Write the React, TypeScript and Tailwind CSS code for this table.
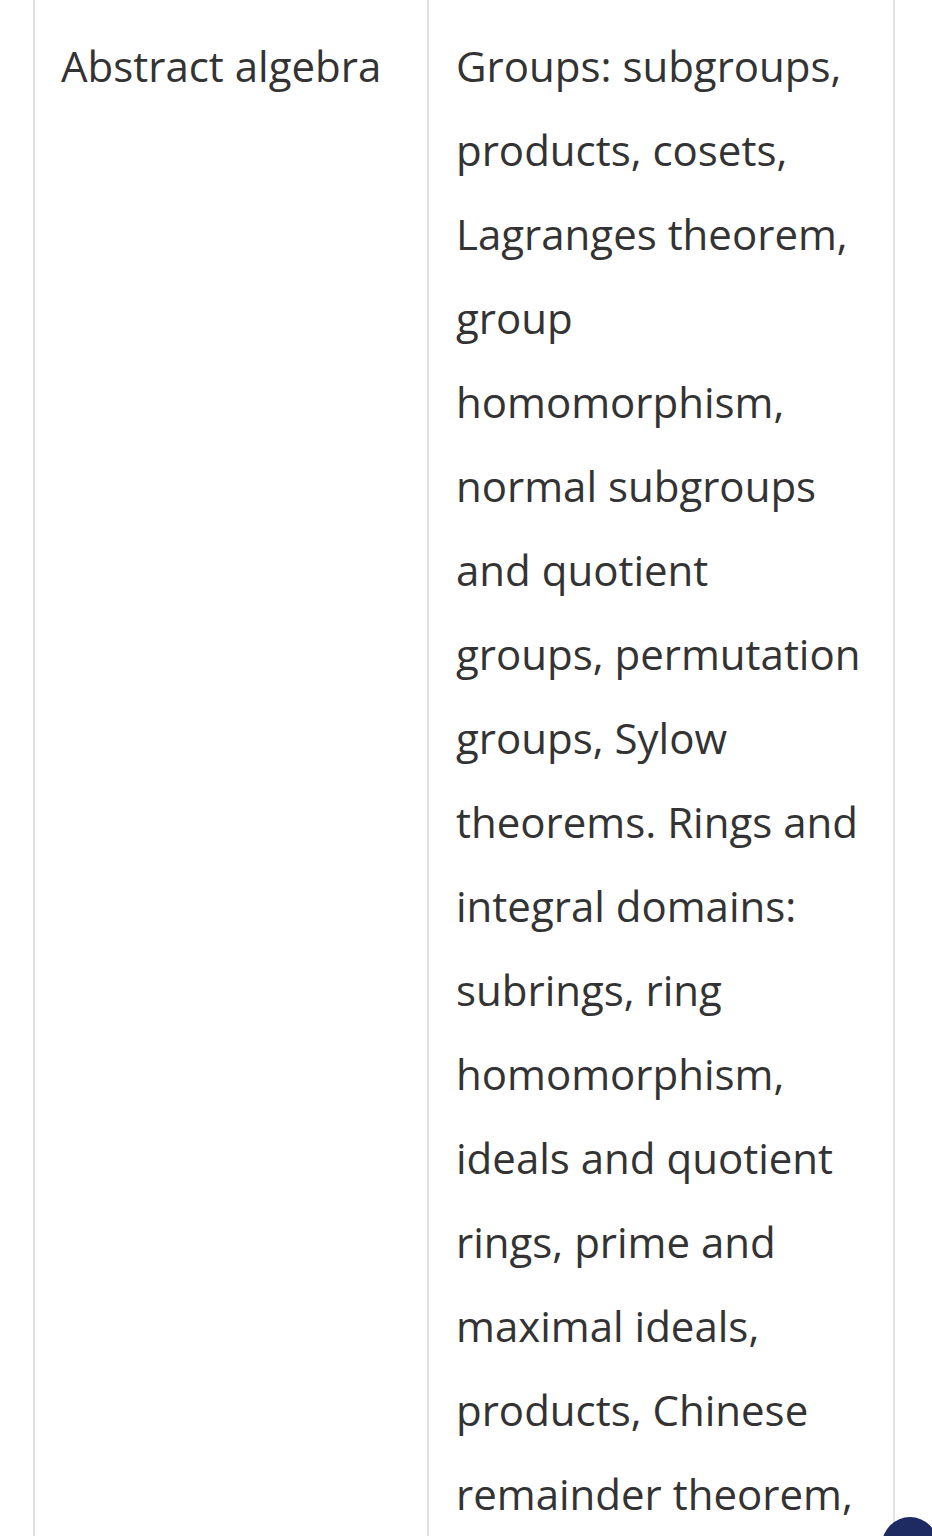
const subject = "Abstract algebra";

const topics = [
  "Groups: subgroups,",
  "products, cosets,",
  "Lagranges theorem,",
  "group",
  "homomorphism,",
  "normal subgroups",
  "and quotient",
  "groups, permutation",
  "groups, Sylow",
  "theorems. Rings and",
  "integral domains:",
  "subrings, ring",
  "homomorphism,",
  "ideals and quotient",
  "rings, prime and",
  "maximal ideals,",
  "products, Chinese",
  "remainder theorem,",
];

export default function App() {
  return (
    <main
      className="relative h-[1536px] w-[932px] overflow-hidden bg-white text-[#333333]"
      style={{ fontFamily: '"Open Sans", "Noto Sans", sans-serif' }}
    >
      <div className="ml-[33px] flex w-[862px] h-full text-[42px] leading-[84px]">
        <div className="w-[396px] shrink-0 border-x-2 border-[#e0e0e0] pl-[26px] pr-4 pt-6">
          {subject}
        </div>
        <div className="flex-1 border-r-2 border-[#e3e3e3] pl-[27px] pr-4 pt-6">
          {topics.map((line, i) => (
            <div key={i} className="whitespace-nowrap">
              {line}
            </div>
          ))}
        </div>
      </div>
      <div className="absolute left-[882px] top-[1517px] h-14 w-14 rounded-full bg-[#1e2b63]" />
    </main>
  );
}
